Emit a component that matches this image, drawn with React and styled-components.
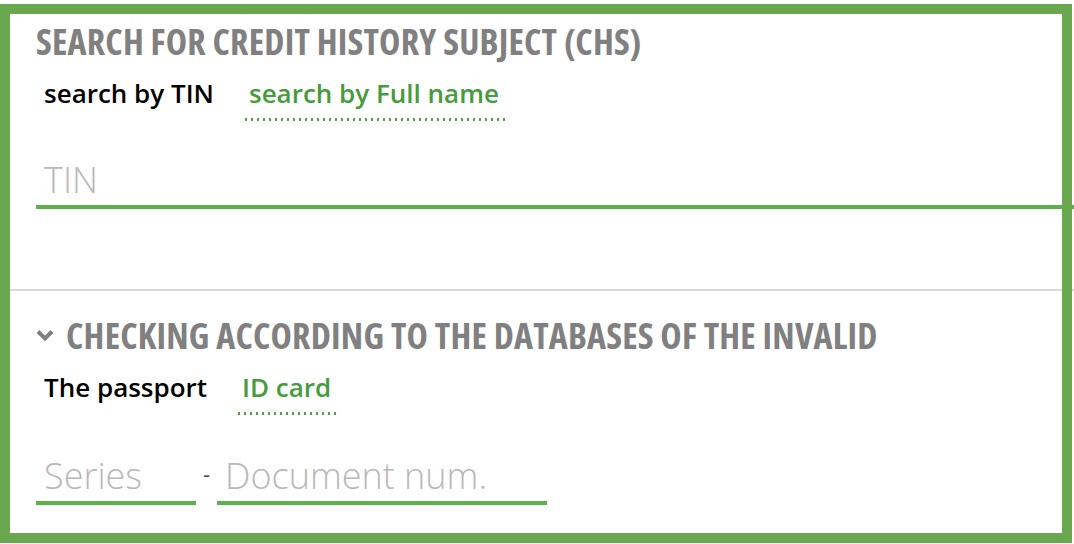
import React from "react";
import styled, { createGlobalStyle } from "styled-components";

const GlobalStyle = createGlobalStyle`
  body {
    margin: 0;
    background: #fff;
    font-family: "Open Sans", "Liberation Sans", sans-serif;
  }
`;

const Frame = styled.div`
  position: relative;
  box-sizing: border-box;
  width: 1072px;
  height: 539px;
  margin-top: 4px;
  padding: 10px;

  &::after {
    content: "";
    position: absolute;
    inset: 0;
    border: 10px solid #6aa84f;
    pointer-events: none;
  }
`;

const Section = styled.section`
  box-sizing: border-box;
  width: 1064px;
  padding: ${(p) => p.$pad};
  border-bottom: ${(p) => (p.$divider ? "2px solid #d9d9d9" : "none")};
`;

const Heading = styled.h2`
  display: flex;
  align-items: center;
  gap: 12px;
  margin: 0;
  font-family: "Open Sans", "Liberation Sans Narrow", sans-serif;
  font-stretch: 75%;
  font-weight: 700;
  font-size: 36px;
  line-height: 44px;
  letter-spacing: 0.2px;
  color: #808080;
  text-transform: uppercase;
  white-space: nowrap;
`;

const Chevron = styled.svg`
  flex: none;
  width: 18px;
  height: 13px;
  margin-top: -2px;
`;

const Tabs = styled.div`
  display: flex;
  gap: 19px;
  margin-top: ${(p) => p.$top}px;
`;

const Tab = styled.button`
  appearance: none;
  border: 0;
  margin: 0;
  padding: 0 8px 13px;
  background: transparent;
  font-family: "Open Sans", sans-serif;
  font-weight: 600;
  font-size: 26px;
  line-height: 30px;
  cursor: pointer;
  color: ${(p) => (p.$active ? "#000" : "#449c3a")};
  background-image: ${(p) =>
    p.$active
      ? "none"
      : "radial-gradient(circle, #4d9f40 1.1px, transparent 1.5px)"};
  background-size: 6px 3px;
  background-repeat: repeat-x;
  background-position: 2px 100%;
`;

const FieldRow = styled.div`
  display: flex;
  align-items: flex-end;
  margin-top: ${(p) => p.$top}px;
`;

const Field = styled.input`
  box-sizing: border-box;
  width: ${(p) => p.$w}px;
  height: 51px;
  margin: 0;
  padding: 0 8px 5px;
  border: 0;
  border-bottom: 4px solid #5db14a;
  border-radius: 0;
  outline: none;
  background: transparent;
  font-family: "Open Sans", sans-serif;
  font-weight: 300;
  font-size: 36px;
  line-height: 40px;
  color: #333;

  &::placeholder {
    color: #b8b8b8;
    opacity: 1;
  }
`;

const Dash = styled.span`
  width: 21px;
  align-self: center;
  margin-top: -14px;
  text-align: center;
  font-family: "Open Sans", sans-serif;
  font-size: 22px;
  color: #444;
`;

export default function App() {
  return (
    <>
      <GlobalStyle />
      <Frame>
        <Section $divider $pad="6px 0 80px 26px">
          <Heading>Search for credit history subject (CHS)</Heading>
          <Tabs $top={14}>
            <Tab $active>search by TIN</Tab>
            <Tab>search by Full name</Tab>
          </Tabs>
          <FieldRow $top={37}>
            <Field $w={1038} placeholder="TIN" />
          </FieldRow>
        </Section>
        <Section $pad="23px 0 0 26px">
          <Heading>
            <Chevron viewBox="0 0 18 13">
              <polyline
                points="2,2.5 9,9.5 16,2.5"
                fill="none"
                stroke="#808080"
                strokeWidth="4"
              />
            </Chevron>
            Checking according to the databases of the invalid
          </Heading>
          <Tabs $top={14}>
            <Tab $active>The passport</Tab>
            <Tab>ID card</Tab>
          </Tabs>
          <FieldRow $top={39}>
            <Field $w={160} placeholder="Series" />
            <Dash>-</Dash>
            <Field $w={330} placeholder="Document num." />
          </FieldRow>
        </Section>
      </Frame>
    </>
  );
}
